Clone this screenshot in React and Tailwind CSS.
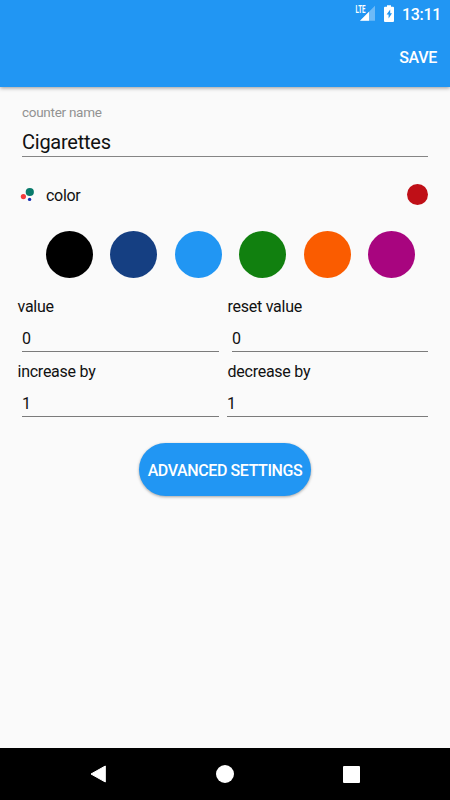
const swatches = [
  "bg-black",
  "bg-[#153f82]",
  "bg-[#2196f3]",
  "bg-[#11800f]",
  "bg-[#fa5c00]",
  "bg-[#a8057f]",
];

const StatusBar = () => (
  <div className="flex h-7 items-center justify-end pr-[9px] text-white">
    <svg width="20" height="22" viewBox="0 -2 20 22" className="mr-[9px]">
      <path d="M20 0.7v15H5z" fill="#fff" fillOpacity="0.35" />
      <path d="M14 6.7v9H5z" fill="#fff" />
      <path d="M0 0h11.5v9H0z" fill="#2196f3" />
      <text
        x="0.5"
        y="8"
        fill="#fff"
        fontSize="10.5"
        fontWeight="700"
        textLength="10"
        lengthAdjust="spacingAndGlyphs"
      >
        LTE
      </text>
    </svg>
    <svg
      width="10"
      height="17"
      viewBox="0 0 10 17"
      className="mr-[8px] mb-[2px]"
    >
      <path
        d="M3 0.3h4v1.4h2a1 1 0 0 1 1 1v13.3a1 1 0 0 1-1 1H1a1 1 0 0 1-1-1V2.7a1 1 0 0 1 1-1h2z"
        fill="#fff"
      />
      <path d="M6.2 4.4 2.6 9.6h2v4l3.4-5.3H6.2z" fill="#2196f3" />
    </svg>
    <span className="pt-[2px] text-[16px] leading-[26px] font-medium tracking-[-0.3px]">
      13:11
    </span>
  </div>
);

const Field = ({ label, value, boxClass }) => (
  <div className="h-[65px] text-[16px] tracking-[-0.25px]">
    <p className="h-[27px] leading-[21px]">{label}</p>
    <div
      className={`flex h-[29px] items-center border-b border-[#7b7b7b] pt-[4px] ${boxClass}`}
    >
      {value}
    </div>
  </div>
);

const NavBar = () => (
  <div className="flex h-[52px] items-center justify-between bg-black pr-[90px] pl-[90px]">
    <svg width="17" height="18" viewBox="0 0 17 18">
      <path
        d="M1 9 15.3 1v16z"
        fill="#fff"
        stroke="#fff"
        strokeWidth="1"
        strokeLinejoin="round"
      />
    </svg>
    <div className="h-[18px] w-[18px] rounded-full bg-white" />
    <div className="h-[17px] w-[17px] rounded-[1px] bg-white" />
  </div>
);

const App = () => {
  return (
    <div className="flex h-[800px] w-[450px] flex-col overflow-hidden bg-[#fafafa] font-['Roboto',sans-serif] text-[#111]">
      <header className="h-[87px] shrink-0 bg-[#2196f3] text-white shadow-[0_1px_4px_rgba(0,0,0,0.4)]">
        <StatusBar />
        <div className="flex h-[59px] items-center justify-end pr-[13px]">
          <button className="text-[16px] font-medium tracking-[-0.3px]">
            SAVE
          </button>
        </div>
      </header>

      <main className="flex-1">
        <div className="mx-[22px] h-[70px] border-b border-[#858585] pt-[16px]">
          <p className="text-[13.5px] leading-[18px] tracking-[-0.28px] text-[#929292]">
            counter name
          </p>
          <p className="mt-[8px] text-[20px] leading-[26px] tracking-[-0.25px]">
            Cigarettes
          </p>
        </div>

        <div className="mt-[26px] flex h-[22px] items-center pr-[22px] pl-[20px]">
          <svg width="15" height="15" viewBox="0 0 15 15">
            <circle cx="9.8" cy="5" r="4.1" fill="#087a6b" />
            <circle cx="3.4" cy="9.6" r="2.6" fill="#f23c3c" />
            <circle cx="9.6" cy="12.4" r="1.7" fill="#1a2fb0" />
          </svg>
          <span className="ml-[11px] pt-[3px] text-[16px] tracking-[-0.3px]">
            color
          </span>
          <div className="ml-auto h-[21px] w-[21px] rounded-full bg-[#bf0f17]" />
        </div>

        <div className="mt-[26px] flex justify-between pr-[35px] pl-[46px]">
          {swatches.map((color) => (
            <button
              key={color}
              className={`h-[47px] w-[47px] rounded-full ${color}`}
            />
          ))}
        </div>

        <div className="mt-[18px] grid grid-cols-[210px_200px] pl-[17.5px]">
          <Field label="value" value="0" boxClass="ml-[4.5px] w-[197px]" />
          <Field label="reset value" value="0" boxClass="ml-[4.5px] w-[196px]" />
          <Field label="increase by" value="1" boxClass="ml-[4.5px] w-[197px]" />
          <Field label="decrease by" value="1" boxClass="-ml-[0.5px] w-[201px]" />
        </div>

        <div className="mt-[17px] flex justify-center">
          <button className="h-[52.5px] w-[172px] rounded-full bg-[#2196f3] pt-[2.5px] text-[16px] font-medium tracking-[-0.4px] whitespace-nowrap text-white shadow-[0_1px_3px_rgba(0,0,0,0.35)]">
            ADVANCED SETTINGS
          </button>
        </div>
      </main>

      <NavBar />
    </div>
  );
};

export default App;
